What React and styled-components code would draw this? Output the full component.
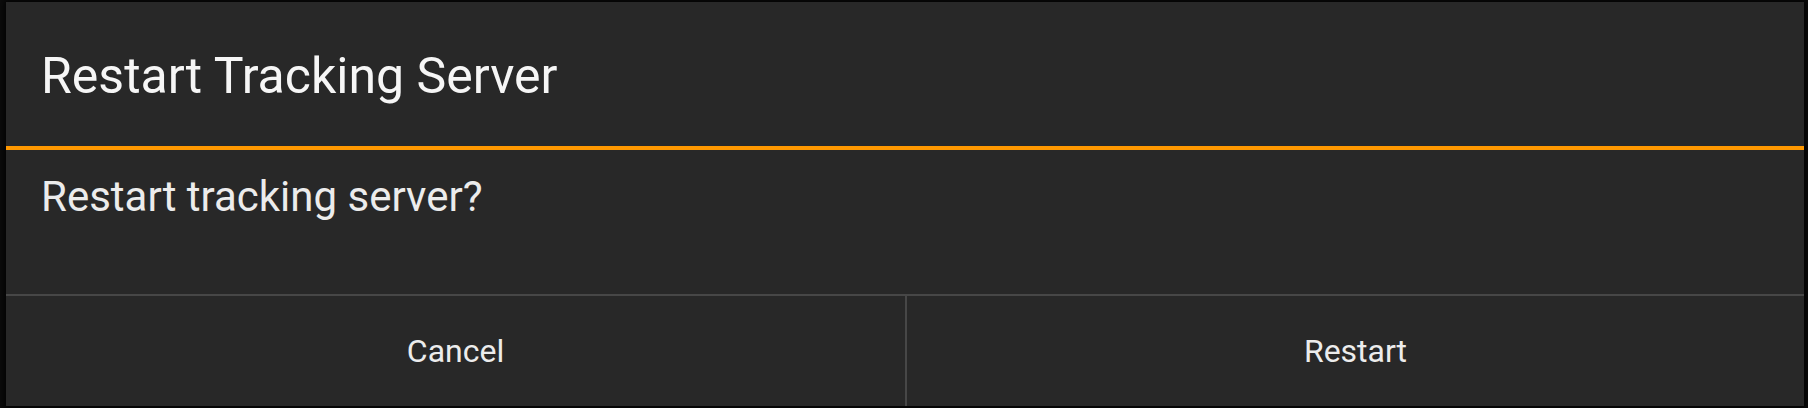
import styled, { createGlobalStyle } from "styled-components";

const GlobalStyle = createGlobalStyle`
  html, body {
    margin: 0;
    padding: 0;
    background: #0c0c0c;
  }
  body {
    font-family: Roboto, "Liberation Sans", sans-serif;
    -webkit-font-smoothing: antialiased;
  }
`;

const Screen = styled.div`
  width: 1808px;
  height: 408px;
  padding: 2px 4px 0 6px;
  box-sizing: border-box;
  overflow: hidden;
`;

const Dialog = styled.div`
  display: flex;
  flex-direction: column;
  width: 1798px;
  background: #282828;
  box-shadow: 0 0 6px 2px rgba(0, 0, 0, 0.8);
`;

const Title = styled.h1`
  margin: 0;
  height: 144px;
  padding-left: 35px;
  line-height: 148px;
  font-size: 50px;
  font-weight: 400;
  color: #f6f6f6;
  border-bottom: 4px solid #ff9800;
`;

const Message = styled.p`
  margin: 0;
  height: 144px;
  box-sizing: border-box;
  padding: 22px 0 0 35px;
  font-size: 42px;
  line-height: normal;
  color: #ececec;
`;

const ButtonRow = styled.div`
  display: grid;
  grid-template-columns: 1fr 1fr;
  height: 110px;
  border-top: 2px solid #474747;
`;

const Button = styled.button`
  border: none;
  background: transparent;
  padding: 0;
  font-family: inherit;
  font-size: 32px;
  color: #ececec;
  cursor: pointer;
  border-left: ${(props) => (props.$divided ? "2px solid #474747" : "none")};
`;

export default function App() {
  return (
    <>
      <GlobalStyle />
      <Screen>
        <Dialog>
          <Title>Restart Tracking Server</Title>
          <Message>Restart tracking server?</Message>
          <ButtonRow>
            <Button>Cancel</Button>
            <Button $divided>Restart</Button>
          </ButtonRow>
        </Dialog>
      </Screen>
    </>
  );
}
